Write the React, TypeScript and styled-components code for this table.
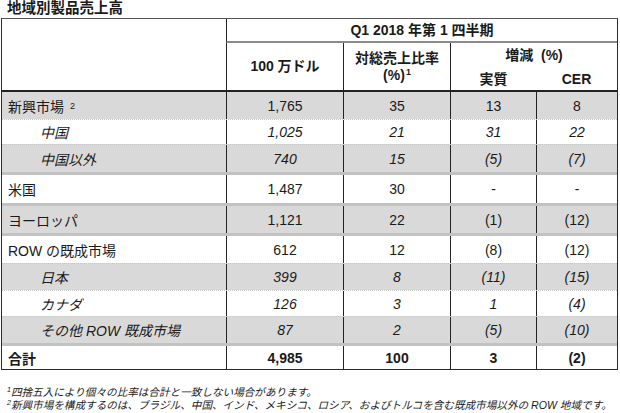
import React from 'react';
import styled, { createGlobalStyle } from 'styled-components';

const GlobalStyle = createGlobalStyle`
  html, body {
    margin: 0;
    padding: 0;
    background: #ffffff;
  }
  body {
    font-family: "Liberation Sans", "Noto Sans CJK JP", Arial, sans-serif;
    color: #1a1a1a;
  }
`;

const Page = styled.div`
  width: 620px;
  height: 413px;
  padding-left: 1px;
  box-sizing: border-box;
`;

const Title = styled.div`
  height: 18px;
  line-height: 17px;
  padding-left: 6px;
  font-size: 14.5px;
  font-weight: bold;
`;

const Table = styled.div`
  width: 617px;
  box-sizing: border-box;
  border: 1px solid #2a2a2a;
  border-top-color: #555;
`;

const cols = '224px 117px 107px 86px 81px';

const Head = styled.div`
  display: grid;
  grid-template-columns: ${cols};
  grid-template-rows: 24px 25px 22px;
  border-bottom: 2px solid #222;
  font-weight: bold;
  font-size: 14px;
`;

const HeadCell = styled.div<{ $area: string; $left?: boolean; $under?: boolean }>`
  grid-area: ${p => p.$area};
  display: flex;
  flex-direction: column;
  align-items: center;
  justify-content: center;
  line-height: 17px;
  box-sizing: border-box;
  white-space: pre;
  border-left: ${p => (p.$left ? '1px solid #222' : 'none')};
  border-bottom: ${p => (p.$under ? '2px solid #8a8a8a' : 'none')};
`;

const Row = styled.div<{ $shade?: boolean; $line?: 'thin' | 'thick'; $h: number; $bold?: boolean }>`
  display: grid;
  grid-template-columns: ${cols};
  height: ${p => p.$h}px;
  box-sizing: border-box;
  background: ${p => (p.$shade ? '#d9d9d9' : '#ffffff')};
  border-top: ${p =>
    p.$line === 'thick' ? '3px solid #c2c2c2' : p.$line === 'thin' ? '1px dotted #c6c6c6' : 'none'};
  font-size: 14px;
  font-weight: ${p => (p.$bold ? 'bold' : 'normal')};
`;

const Label = styled.div<{ $sub?: boolean }>`
  display: flex;
  align-items: center;
  padding-left: ${p => (p.$sub ? '38px' : '6px')};
  font-style: ${p => (p.$sub ? 'italic' : 'normal')};
  white-space: nowrap;
`;

const Num = styled.div<{ $italic?: boolean }>`
  display: flex;
  align-items: center;
  justify-content: center;
  border-left: 1px solid #222;
  font-style: ${p => (p.$italic ? 'italic' : 'normal')};
`;

const Sup = styled.sup`
  font-size: 9px;
  line-height: 0;
  vertical-align: 5px;
  margin-left: 1px;
`;

const Notes = styled.div`
  margin-top: 16px;
  padding-left: 6px;
  font-size: 10.6px;
  font-style: italic;
  line-height: 13px;
  white-space: nowrap;
`;

const NoteSup = styled.sup`
  font-size: 7px;
  line-height: 0;
  vertical-align: 4px;
`;

type Item = {
  label: string;
  sup?: string;
  sub?: boolean;
  shade?: boolean;
  line?: 'thin' | 'thick';
  bold?: boolean;
  h: number;
  v: string[];
};

const rows: Item[] = [
  { label: '新興市場', sup: '2', shade: true, h: 27, v: ['1,765', '35', '13', '8'] },
  { label: '中国', sub: true, line: 'thin', h: 25, v: ['1,025', '21', '31', '22'] },
  { label: '中国以外', sub: true, shade: true, line: 'thin', h: 28, v: ['740', '15', '(5)', '(7)'] },
  { label: '米国', line: 'thick', h: 31, v: ['1,487', '30', '-', '-'] },
  { label: 'ヨーロッパ', shade: true, line: 'thick', h: 30, v: ['1,121', '22', '(1)', '(12)'] },
  { label: 'ROW の既成市場', line: 'thick', h: 30, v: ['612', '12', '(8)', '(12)'] },
  { label: '日本', sub: true, shade: true, line: 'thin', h: 27, v: ['399', '8', '(11)', '(15)'] },
  { label: 'カナダ', sub: true, line: 'thin', h: 26, v: ['126', '3', '1', '(4)'] },
  { label: 'その他 ROW 既成市場', sub: true, shade: true, line: 'thin', h: 27, v: ['87', '2', '(5)', '(10)'] },
  { label: '合計', bold: true, line: 'thick', h: 26, v: ['4,985', '100', '3', '(2)'] },
];

const App: React.FC = () => {
  return (
    <Page>
      <GlobalStyle />
      <Title>地域別製品売上高</Title>
      <Table>
        <Head>
          <HeadCell $area="1 / 1 / 4 / 2" />
          <HeadCell $area="1 / 2 / 2 / 6" $left $under>Q1 2018 年第 1 四半期</HeadCell>
          <HeadCell $area="2 / 2 / 4 / 3" $left>100 万ドル</HeadCell>
          <HeadCell $area="2 / 3 / 4 / 4" $left>
            <span>対総売上比率</span>
            <span>(%)<Sup>1</Sup></span>
          </HeadCell>
          <HeadCell $area="2 / 4 / 3 / 6" $left>{'増減  (%)'}</HeadCell>
          <HeadCell $area="3 / 4 / 4 / 5" $left>実質</HeadCell>
          <HeadCell $area="3 / 5 / 4 / 6">CER</HeadCell>
        </Head>
        {rows.map(r => (
          <Row key={r.label} $shade={r.shade} $line={r.line} $h={r.h} $bold={r.bold}>
            <Label $sub={r.sub}>
              {r.label}
              {r.sup && <Sup>&nbsp;&nbsp;{r.sup}</Sup>}
            </Label>
            {r.v.map((val, i) => (
              <Num key={i} $italic={r.sub}>{val}</Num>
            ))}
          </Row>
        ))}
      </Table>
      <Notes>
        <div><NoteSup>1</NoteSup>四捨五入により個々の比率は合計と一致しない場合があります。</div>
        <div><NoteSup>2</NoteSup>新興市場を構成するのは、ブラジル、中国、インド、メキシコ、ロシア、およびトルコを含む既成市場以外の ROW 地域です。</div>
      </Notes>
    </Page>
  );
};

export default App;
